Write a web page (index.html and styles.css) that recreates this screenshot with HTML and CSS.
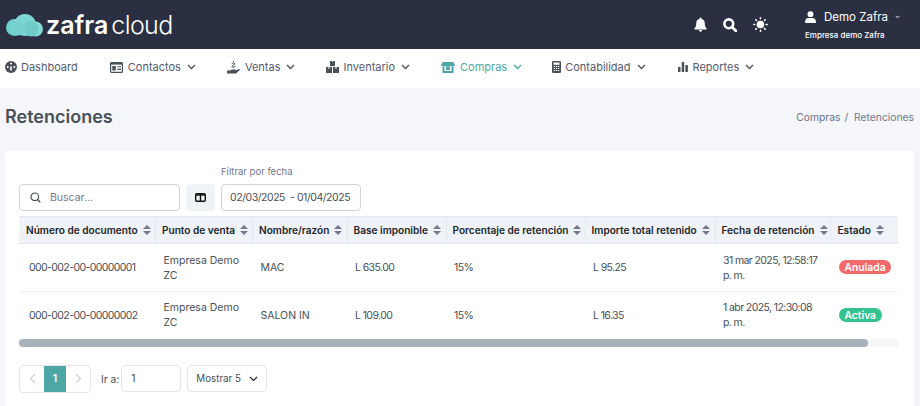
FILE: index.html
```html
<!DOCTYPE html>
<html lang="es">
<head>
<meta charset="utf-8">
<title>Retenciones</title>
<link rel="stylesheet" href="styles.css">
</head>
<body>
<header class="topbar">
  <div class="brand">
    <svg class="cloud" width="37" height="23" viewBox="0 0 37 23"><circle cx="8.500" cy="13.500" r="8.500" fill="#6fcfcb"/><circle cx="19" cy="11" r="11" fill="#7dd6d2"/><circle cx="29.500" cy="15" r="7.500" fill="#86dad6"/><circle cx="25" cy="15" r="7.500" fill="#6ecbc7"/><circle cx="12" cy="14" r="7.500" fill="#76d2ce"/></svg>
    <span class="brand-a">zafra</span><span class="brand-b">cloud</span>
  </div>
  <div class="top-actions">
    <svg class="ticon" width="13" height="15" viewBox="0 0 14 15"><path d="M7 0a1 1 0 0 1 1 1v.7A4.6 4.6 0 0 1 11.600 6.300c0 3.300 1 4.500 2 5.500.3.400 0 1-.5 1H.9c-.5 0-.8-.6-.5-1 1-1 2-2.200 2-5.500A4.600 4.600 0 0 1 6 1.700V1a1 1 0 0 1 1-1zM5.300 13.500h3.400a1.700 1.700 0 0 1-3.400 0z" fill="#fff"/></svg>
    <svg class="ticon" width="14" height="14" viewBox="0 0 14 14"><circle cx="5.800" cy="5.800" r="4.400" fill="none" stroke="#fff" stroke-width="2.600"/><path d="M9 9l4 4" stroke="#fff" stroke-width="2.800" stroke-linecap="round"/></svg>
    <svg class="ticon" width="15" height="15" viewBox="0 0 15 15"><circle cx="7.500" cy="7.500" r="3.800" fill="#fff"/><g stroke="#fff" stroke-width="1.600" stroke-linecap="round"><path d="M7.500.8v1M7.500 13.200v1M.8 7.500h1M13.200 7.500h1M2.800 2.800l.6.6M11.600 11.600l.6.6M2.800 12.200l.6-.6M11.600 3.400l.6-.6"/></g></svg>
    <div class="user">
      <div class="user-line">
        <svg width="13" height="14" viewBox="0 0 13 14"><circle cx="6.500" cy="3.600" r="3.500" fill="#fff"/><path d="M0 13.200c0-3.500 2-5 4-5h5c2 0 4 1.500 4 5 0 .5-.3.800-.8.800H.8c-.5 0-.8-.3-.8-.8z" fill="#fff"/></svg>
        <span class="user-name">Demo Zafra</span>
        <svg width="6" height="4" viewBox="0 0 7 5"><path d="M1 1l2.500 2.500L6 1" fill="none" stroke="#fff" stroke-width="1.300"/></svg>
      </div>
      <div class="user-org">Empresa demo Zafra</div>
    </div>
  </div>
</header>

<nav class="menu">
  <a class="item i1"><svg width="12" height="12" viewBox="0 0 12 12"><circle cx="6" cy="6" r="6" fill="#495057"/><circle cx="6" cy="2.600" r="1" fill="#fff"/><circle cx="2.700" cy="6" r="1" fill="#fff"/><circle cx="9.300" cy="6" r="1" fill="#fff"/><path d="M6 5.500v4" stroke="#fff" stroke-width="1.600"/></svg>Dashboard</a>
  <a class="item i2"><svg width="13" height="11" viewBox="0 0 13 11"><rect x=".6" y=".6" width="11.800" height="9.800" rx="1" fill="none" stroke="#495057" stroke-width="1.200"/><rect x=".6" y=".6" width="11.800" height="2" fill="#495057"/><rect x="2.300" y="4" width="3.500" height="4.500" fill="#495057"/><path d="M7.300 4.800h3.700M7.300 7.400h3.700" stroke="#495057" stroke-width="1.100"/></svg>Contactos<svg class="chev" width="9" height="6" viewBox="0 0 9 6"><path d="M1 1l3.500 3.500L8 1" fill="none" stroke="#495057" stroke-width="1.300"/></svg></a>
  <a class="item i3"><svg width="13" height="13" viewBox="0 0 13 13"><path d="M0 9.500h3l2-1h3c.8 0 .8 1.300 0 1.300H6l4-.9 1.800-.9c.9-.2 1.500.7.700 1.300L9 12.500H0z" fill="#495057"/><path d="M6.500 0v1M5 3c0-1.500 3-1.500 3 0 0 1.500-3 .8-3 2.200 0 1.400 3 1.400 3 0M6.500 6v1" fill="none" stroke="#495057" stroke-width="1"/></svg>Ventas<svg class="chev" width="9" height="6" viewBox="0 0 9 6"><path d="M1 1l3.500 3.500L8 1" fill="none" stroke="#495057" stroke-width="1.300"/></svg></a>
  <a class="item i4"><svg width="13" height="12" viewBox="0 0 13 12"><path d="M4 0h2v1h1V0h2v5H4zM0 6h6v6H0zM7 6h6v6H7z" fill="#495057"/><path d="M3 6v2M10 6v2" stroke="#fff" stroke-width="1"/></svg>Inventario<svg class="chev" width="9" height="6" viewBox="0 0 9 6"><path d="M1 1l3.500 3.500L8 1" fill="none" stroke="#495057" stroke-width="1.300"/></svg></a>
  <a class="item i5 active"><svg width="14" height="11" viewBox="0 0 14 11"><path d="M1.800 0h10.400L14 3.200c0 .5-.4 1-1 1H1c-.6 0-1-.5-1-1z" fill="#4ea7a4"/><path d="M1.500 4.500h2V11h-2zM10.500 4.500h2V11h-2zM3.500 9h7v2h-7z" fill="#4ea7a4"/><path d="M5 4.500h4V8H5z" fill="#4ea7a4"/></svg>Compras<svg class="chev" width="9" height="6" viewBox="0 0 9 6"><path d="M1 1l3.500 3.500L8 1" fill="none" stroke="#4ea7a4" stroke-width="1.300"/></svg></a>
  <a class="item i6"><svg width="9" height="12" viewBox="0 0 9 12"><rect width="9" height="12" rx="1.200" fill="#495057"/><rect x="1.500" y="1.500" width="6" height="2.300" fill="#fff"/><path d="M1.700 5.500h1.400M3.800 5.500h1.400M5.900 5.500h1.400M1.700 7.500h1.400M3.800 7.500h1.400M5.900 7.500h1.400M1.700 9.500h1.400M3.800 9.500h1.400M5.900 9.500h1.400" stroke="#fff" stroke-width=".9"/></svg>Contabilidad<svg class="chev" width="9" height="6" viewBox="0 0 9 6"><path d="M1 1l3.500 3.500L8 1" fill="none" stroke="#495057" stroke-width="1.300"/></svg></a>
  <a class="item i7"><svg width="10" height="10" viewBox="0 0 10 10"><rect y="5" width="2.500" height="5" rx=".5" fill="#495057"/><rect x="3.700" y="0" width="2.500" height="10" rx=".5" fill="#495057"/><rect x="7.400" y="3" width="2.500" height="7" rx=".5" fill="#495057"/></svg>Reportes<svg class="chev" width="9" height="6" viewBox="0 0 9 6"><path d="M1 1l3.500 3.500L8 1" fill="none" stroke="#495057" stroke-width="1.300"/></svg></a>
</nav>

<main class="page">
  <div class="title-row">
    <h1>Retenciones</h1>
    <div class="crumbs"><span>Compras</span><span class="sep">/</span><span class="crumb-now">Retenciones</span></div>
  </div>
  <section class="card">
    <div class="filters">
      <label class="search">
        <svg width="11" height="11" viewBox="0 0 11 11"><circle cx="4.800" cy="4.800" r="3.800" fill="none" stroke="#495057" stroke-width="1.200"/><path d="M7.600 7.600l2.600 2.600" stroke="#495057" stroke-width="1.400"/></svg>
        <span class="placeholder">Buscar...</span>
      </label>
      <button class="cols-btn"><svg width="11" height="9" viewBox="0 0 11 9"><rect x=".7" y=".7" width="9.600" height="7.600" rx="1.200" fill="none" stroke="#111" stroke-width="1.400"/><path d="M5.500 1v7" stroke="#111" stroke-width="1.400"/><path d="M1 2h9" stroke="#111" stroke-width="1.400"/></svg></button>
      <div class="date-group">
        <div class="date-label">Filtrar por fecha</div>
        <div class="date-input">02/03/2025 &nbsp;- 01/04/2025</div>
      </div>
    </div>
    <div class="table-wrap">
      <table>
        <colgroup>
          <col class="c1"><col class="c2"><col class="c3"><col class="c4"><col class="c5"><col class="c6"><col class="c7"><col class="c8">
        </colgroup>
        <thead>
          <tr>
            <th>Número de documento<i class="sort"></i></th>
            <th>Punto de venta<i class="sort"></i></th>
            <th>Nombre/razón<i class="sort"></i></th>
            <th>Base imponible<i class="sort"></i></th>
            <th>Porcentaje de retención<i class="sort"></i></th>
            <th>Importe total retenido<i class="sort"></i></th>
            <th>Fecha de retención<i class="sort"></i></th>
            <th>Estado<i class="sort"></i></th>
          </tr>
        </thead>
        <tbody>
          <tr>
            <td class="first num">000-002-00-00000001</td><td>Empresa Demo ZC</td><td>MAC</td><td class="num">L 635.00</td><td class="num">15%</td><td class="num">L 95.25</td><td class="num">31 mar 2025, 12:58:17 p. m.</td><td class="status"><span class="badge red">Anulada</span></td>
          </tr>
          <tr>
            <td class="first num">000-002-00-00000002</td><td>Empresa Demo ZC</td><td>SALON IN</td><td class="num">L 109.00</td><td class="num">15%</td><td class="num">L 16.35</td><td class="num">1 abr 2025, 12:30:08 p. m.</td><td class="status"><span class="badge green">Activa</span></td>
          </tr>
        </tbody>
      </table>
    </div>
    <div class="scrollbar"><div class="thumb"></div></div>
    <div class="pager">
      <div class="pages">
        <span class="pg"><svg width="7" height="11" viewBox="0 0 7 11"><path d="M6 1L1.500 5.500 6 10" fill="none" stroke="#ced4da" stroke-width="1.300"/></svg></span>
        <span class="pg current">1</span>
        <span class="pg"><svg width="7" height="11" viewBox="0 0 7 11"><path d="M1 1l4.500 4.500L1 10" fill="none" stroke="#ced4da" stroke-width="1.300"/></svg></span>
      </div>
      <span class="goto">Ir a:</span>
      <div class="goto-input">1</div>
      <div class="show">Mostrar 5<svg width="9" height="6" viewBox="0 0 9 6"><path d="M1 1l3.500 3.500L8 1" fill="none" stroke="#212529" stroke-width="1.200"/></svg></div>
    </div>
  </section>
</main>
</body>
</html>
```

FILE: styles.css
```css
* { box-sizing: border-box; }
html, body { margin: 0; height: 100%; }
body {
  width: 920px;
  height: 406px;
  overflow: hidden;
  background: #f5f6fa;
  font-family: "Inter", "Open Sans", sans-serif;
  font-size: 10.500px;
  color: #495057;
}
.topbar {
  height: 49px;
  background: #2a3042;
  display: flex;
  align-items: center;
  justify-content: space-between;
  padding: 0 20px 0 6px;
}
.brand { display: flex; align-items: center; color: #fff; }
.cloud { margin-right: 3px; margin-top: 1px; }
.brand-a { font-size: 25px; font-weight: 600; letter-spacing: 0; }
.brand-b { font-size: 25px; font-weight: 300; margin-left: 3px; letter-spacing: -.6px; }
.top-actions { display: flex; align-items: center; }
.ticon { margin-right: 16px; }
.user { margin-left: 21px; color: #fff; width: 95px; }
.user-line { display: flex; align-items: center; gap: 7px; white-space: nowrap; }
.user-name { font-size: 11.500px; margin-left: 1px; }
.user-org { font-size: 8px; margin-top: 6px; font-weight: 500; white-space: nowrap; }
.menu {
  height: 39px;
  background: #fff;
  display: flex;
  align-items: center;
  padding: 0 0 3px 5px;
  font-size: 11px;
  color: #545a6d;
}
.item { display: flex; align-items: center; gap: 5px; }
.chev { margin-left: 1px; }
.i1 { gap: 4px; }
.i2 { margin-left: 32px; }
.i3 { margin-left: 31px; }
.i4 { margin-left: 31px; gap: 4px; }
.i5 { margin-left: 31px; }
.i6 { margin-left: 30px; gap: 4px; }
.i7 { margin-left: 32px; }
.i4 .chev, .i6 .chev { margin-left: 2px; }
.active { color: #4ea7a4; }
.page { padding: 0 6px 0 5px; }
.title-row {
  height: 63px;
  display: flex;
  align-items: center;
  justify-content: space-between;
  padding-bottom: 6px;
}
h1 { margin: 0; font-size: 18px; font-weight: 600; color: #495057; }
.crumbs { font-size: 10.300px; color: #6b7280; display: flex; }
.sep { margin: 0 6px 0 4px; }
.crumb-now { color: #74788d; }
.card {
  background: #fff;
  border-radius: 4px;
  padding: 12px 14px 0;
  height: 260px;
}
.filters { display: flex; align-items: flex-end; height: 48px; }
.search {
  width: 161px;
  height: 27px;
  border: 1px solid #ced4da;
  border-radius: 4px;
  display: flex;
  align-items: center;
  padding-left: 10px;
  gap: 9px;
}
.placeholder { color: #74788d; font-size: 10.500px; }
.cols-btn {
  width: 29px;
  height: 27px;
  margin: 0 6px 0 6px;
  border: 0;
  border-radius: 4px;
  background: #eff2f7;
  display: flex;
  align-items: center;
  justify-content: center;
  padding: 0;
}
.date-label { font-size: 9.500px; color: #74788d; margin-bottom: 7px; }
.date-input {
  width: 140px;
  height: 27px;
  border: 1px solid #ced4da;
  border-radius: 4px;
  display: flex;
  align-items: center;
  padding-left: 8px;
  font-size: 10.500px;
  letter-spacing: -.45px;
  color: #495057;
  white-space: pre;
}
.num { letter-spacing: -.6px; }
.table-wrap {
  width: 879px;
  margin-top: 5px;
  overflow: hidden;
}
table { border-collapse: collapse; table-layout: fixed; width: 910px; }
.c1 { width: 136.500px; }
.c2 { width: 97px; }
.c3 { width: 94.500px; }
.c4 { width: 99px; }
.c5 { width: 139px; }
.c6 { width: 130px; }
.c7 { width: 115px; }
.c8 { width: 99px; }
th {
  height: 27px;
  padding: 0 0 0 6px;
  background: #eff2f7;
  border: 1px solid #e4e7ee;
  border-width: 1px 1px 1px 0;
  text-align: left;
  font-size: 10.100px;
  font-weight: 600;
  color: #212529;
  white-space: nowrap;
}
th:first-child { padding-left: 7px; }
th:last-child { padding-left: 7px; }
.sort {
  display: inline-block;
  width: 8px;
  height: 10px;
  margin-left: 5px;
  vertical-align: -1px;
  position: relative;
}
.sort::before, .sort::after {
  content: "";
  position: absolute;
  left: 0;
  border-left: 4px solid transparent;
  border-right: 4px solid transparent;
}
.sort::before { top: 0; border-bottom: 4.500px solid #74788d; }
.sort::after { bottom: 0; border-top: 4.500px solid #74788d; }
td {
  height: 48px;
  padding: 0 8px;
  font-size: 10.500px;
  line-height: 15px;
  color: #495057;
  border-bottom: 1px solid #eff2f7;
}
td.first { padding-left: 10px; white-space: nowrap; }
td.status { padding-left: 9px; }
tbody tr:last-child td { height: 47px; border-bottom: 0; }
.badge {
  display: inline-block;
  height: 14px;
  line-height: 14px;
  padding: 0 5.500px;
  border-radius: 7px;
  color: #fff;
  font-size: 10.300px;
  font-weight: 600;
}
.red { background: #f46a6a; }
.green { background: #34c38f; }
.scrollbar { width: 879px; height: 8px; background: #f5f6f8; }
.thumb { width: 849px; height: 8px; background: #a9b1ba; border-radius: 4px; }
.pager { display: flex; align-items: center; margin-top: 18px; }
.pages {
  display: flex;
  height: 28px;
  border: 1px solid #e2e5ec;
  border-radius: 4px;
  overflow: hidden;
}
.pg { width: 24px; display: flex; align-items: center; justify-content: center; }
.current { background: #4ea7a4; color: #fff; font-weight: 600; width: 22px; }
.goto { margin-left: 10px; margin-right: 2px; font-size: 10.300px; }
.goto-input {
  width: 60px;
  height: 27px;
  border: 1px solid #e2e5ec;
  border-radius: 4px;
  display: flex;
  align-items: center;
  padding-left: 9px;
}
.show {
  margin-left: 6px;
  width: 80px;
  height: 27px;
  border: 1px solid #e2e5ec;
  border-radius: 4px;
  display: flex;
  align-items: center;
  gap: 8px;
  padding-left: 8px;
  font-size: 9.800px;
}
```
